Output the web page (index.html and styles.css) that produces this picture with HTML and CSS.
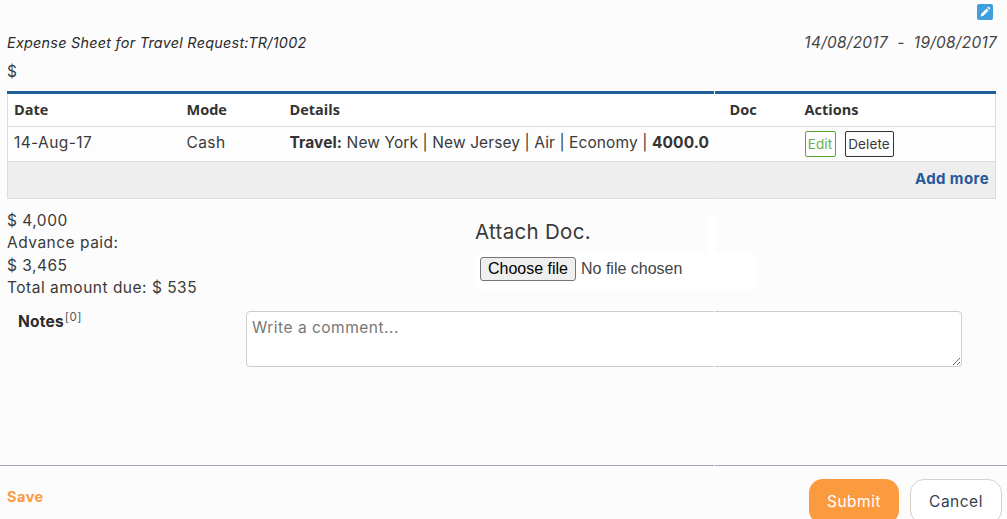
FILE: index.html
```html
<!DOCTYPE html>
<html lang="en">
<head>
<meta charset="utf-8">
<title>Expense Sheet</title>
<link rel="stylesheet" href="styles.css">
</head>
<body>
<div class="page">
  <div class="edit-row">
    <span class="edit-icon">
      <svg viewBox="0 0 16 16" width="16" height="16"><rect width="16" height="16" rx="2" fill="#3f9fde"/><path d="M3.6 12.4l.7-2.7 5.3-5.3 2 2-5.3 5.3z" fill="#fff"/><path d="M10.3 3.7l.6-.6a1 1 0 0 1 1.4 0l.6.6a1 1 0 0 1 0 1.4l-.6.6z" fill="#fff"/></svg>
    </span>
  </div>
  <div class="title-row">
    <em class="title">Expense Sheet for Travel Request:TR/1002</em>
    <em class="dates">14/08/2017 &nbsp;-&nbsp; 19/08/2017</em>
  </div>
  <div class="currency">$</div>
  <table class="sheet">
    <thead>
      <tr><th class="c-date">Date</th><th class="c-mode">Mode</th><th class="c-details">Details</th><th class="c-doc">Doc</th><th>Actions</th></tr>
    </thead>
    <tbody>
      <tr>
        <td>14-Aug-17</td><td>Cash</td>
        <td class="details"><b>Travel:</b> New York | New Jersey | Air | Economy | <b>4000.0</b></td>
        <td></td>
        <td class="actions"><span class="btn-edit">Edit</span><span class="btn-delete">Delete</span></td>
      </tr>
    </tbody>
    <tfoot>
      <tr><td colspan="5" class="add-more">Add more</td></tr>
    </tfoot>
  </table>
  <div class="lower">
    <div class="summary">
      <div>$ 4,000</div>
      <div>Advance paid:</div>
      <div>$ 3,465</div>
      <div>Total amount due: $ 535</div>
    </div>
    <div class="attach">
      <div class="attach-title">Attach Doc.</div>
      <div class="attach-input">
        <button type="button" class="file-btn">Choose file</button>
        <span class="file-name">No file chosen</span>
      </div>
    </div>
  </div>
  <div class="notes">
    <div class="notes-label"><b>Notes</b><sup>[0]</sup></div>
    <textarea class="comment" placeholder="Write a comment..."></textarea>
  </div>
  <div class="footer">
    <span class="save">Save</span>
    <div class="footer-actions">
      <span class="submit">Submit</span>
      <span class="cancel">Cancel</span>
    </div>
  </div>
  <div class="seam"></div>
</div>
</body>
</html>
```
FILE: styles.css
```css
html, body {
  margin: 0;
  height: 519px;
  overflow: hidden;
  background: #fcfcfc;
}
.page {
  position: relative;
  height: 519px;
  overflow: hidden;
  box-sizing: border-box;
  font-family: "Inter", "Lato", sans-serif;
  font-size: 15.5px;
  letter-spacing: 0.5px;
  color: #3a3a3a;
}
.edit-row {
  display: flex;
  justify-content: flex-end;
  padding: 4px 14px 0 0;
  height: 20px;
  box-sizing: border-box;
}
.edit-icon { display: block; width: 16px; height: 16px; line-height: 0; }
.title-row {
  display: flex;
  justify-content: space-between;
  padding: 11px 10px 0 7px;
  height: 37px;
  box-sizing: border-box;
  line-height: 24px;
}
.title { font-size: 14.4px; letter-spacing: 0.25px; color: #2b2b2b; }
.dates { font-size: 15.4px; letter-spacing: 0.3px; color: #444; }
.currency { padding-left: 7px; height: 34px; line-height: 29px; font-size: 15.5px; }
.sheet {
  margin-left: 7px;
  width: 989px;
  border-collapse: collapse;
  table-layout: fixed;
  border: 1px solid #dcdcdc;
  border-top: 3px solid #1f5f99;
  background: #fff;
  letter-spacing: 0;
}
.sheet th {
  text-align: left;
  height: 34px;
  padding: 0 6px 2px;
  box-sizing: border-box;
  font-family: "Open Sans", sans-serif;
  font-size: 14.5px;
  font-weight: 700;
  color: #333;
  border-bottom: 1px solid #dcdcdc;
}
.c-date { width: 173px; }
.c-mode { width: 103px; }
.c-details { width: 440px; }
.c-doc { width: 75px; }
.sheet tbody td {
  height: 35px;
  box-sizing: border-box;
  padding: 0 6px 3px;
  font-size: 15.5px;
  letter-spacing: 0.4px;
  white-space: nowrap;
  overflow: hidden;
  background: #fdfdfd;
  border-bottom: 1px solid #dcdcdc;
}
.sheet td b { color: #333; font-weight: 700; }
.sheet tbody .details { letter-spacing: 0.1px; }
.sheet tbody .actions { padding-bottom: 0; padding-top: 0; }
.btn-edit, .btn-delete {
  display: inline-block;
  height: 26px;
  line-height: 24px;
  box-sizing: border-box;
  border-radius: 2px;
  font-size: 13.5px;
  letter-spacing: 0.1px;
  text-align: center;
  vertical-align: middle;
}
.btn-edit { width: 31px; border: 1px solid #55a82a; color: #6aae50; }
.btn-delete { width: 49px; margin-left: 9px; border: 1px solid #333; color: #3a3a3a; }
.sheet .add-more {
  height: 37px;
  box-sizing: border-box;
  padding: 0 6px 3px;
  background: #eeeeee;
  text-align: right;
  font-size: 15px;
  letter-spacing: 0.4px;
  font-weight: 700;
  color: #27589b;
}
.lower {
  display: flex;
  height: 113px;
  padding: 11px 0 0 7px;
  box-sizing: border-box;
}
.summary { width: 468px; line-height: 22.4px; }
.attach { position: relative; display: flex; flex-direction: column; }
.attach-title { font-size: 20.5px; letter-spacing: 0.3px; height: 43px; line-height: 43px; color: #3a3a3a; }
.attach-input {
  position: relative;
  width: 280px;
  height: 37px;
  background: #fff;
  border-radius: 5px;
  display: flex;
  align-items: center;
  gap: 5px;
  padding: 0 0 5px 5px;
  box-sizing: border-box;
  font-family: "Liberation Sans", sans-serif;
  font-size: 16px;
  letter-spacing: 0;
}
.attach-input::before {
  content: "";
  position: absolute;
  left: 232px;
  bottom: 37px;
  width: 8px;
  height: 39px;
  background: #fff;
}
.file-btn {
  width: 96px;
  height: 24px;
  padding: 0;
  font: inherit;
  color: #000;
  background: #efefef;
  border: 1px solid #767676;
  border-radius: 3px;
}
.file-name { color: #444; }
.notes {
  display: flex;
  margin-top: -1px;
  height: 154px;
  box-sizing: border-box;
}
.notes-label { width: 246px; padding-left: 18px; box-sizing: border-box; line-height: 22px; }
.notes-label b { color: #2b2b2b; letter-spacing: 0.2px; }
.notes-label sup { font-size: 11.5px; color: #555; line-height: 0; margin-left: 1px; }
.comment {
  width: 716px;
  height: 56px;
  box-sizing: border-box;
  border: 1px solid #cccccc;
  border-radius: 4px;
  background: #fff;
  padding: 6px 5px;
  font-family: "Inter", sans-serif;
  font-size: 15.5px;
  letter-spacing: 0.5px;
  color: #444;
}
.comment::placeholder { color: #777; }
.footer {
  display: flex;
  justify-content: space-between;
  border-top: 1px solid #a6a6b8;
  padding: 13px 5px 0 7px;
  height: 54px;
  box-sizing: border-box;
}
.save { font-size: 14.5px; font-weight: 700; color: #fb9a3e; line-height: 36px; }
.footer-actions { display: flex; gap: 11px; }
.submit, .cancel {
  display: flex;
  align-items: center;
  justify-content: center;
  height: 45px;
  border-radius: 14px;
  box-sizing: border-box;
  font-size: 15.5px;
}
.submit { width: 90px; background: #fb9a3e; color: #fff; }
.cancel { width: 92px; border: 1px solid #d8cfc8; background: #fff; color: #37404f; }
.seam {
  position: absolute;
  left: 714px;
  top: 0;
  width: 1px;
  height: 519px;
  background:
    linear-gradient(#fff, #fff) 0 91px / 1px 3px no-repeat,
    linear-gradient(#fff, #fff) 0 126px / 1px 1px no-repeat,
    linear-gradient(#fff, #fff) 0 161px / 1px 1px no-repeat,
    linear-gradient(#fff, #fff) 0 198px / 1px 1px no-repeat,
    linear-gradient(#fff, #fff) 0 311px / 1px 1px no-repeat,
    linear-gradient(#fff, #fff) 0 366px / 1px 1px no-repeat,
    linear-gradient(#fff, #fff) 0 465px / 1px 1px no-repeat;
}
```
